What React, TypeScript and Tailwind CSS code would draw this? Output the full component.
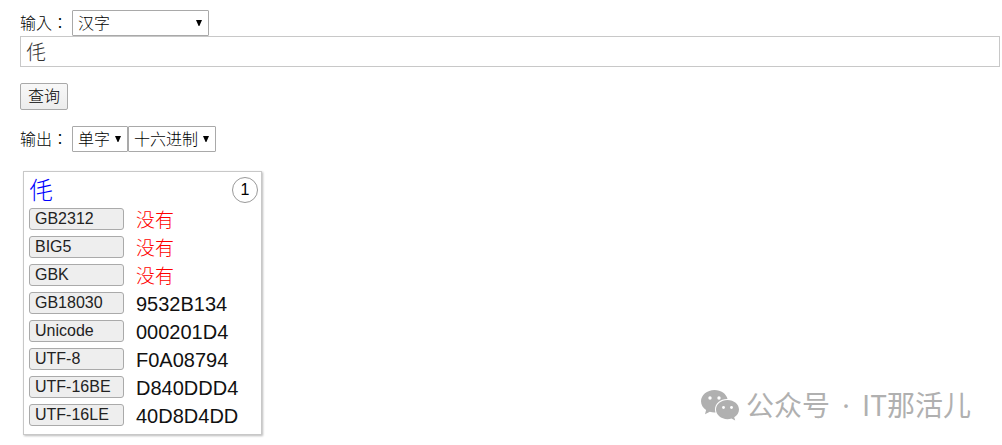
import { useState } from 'react';

interface CodeRow {
  label: string;
  value: string | null;
}

interface SelectBoxProps {
  label: string;
  options: string[];
  className: string;
}

const CHAR = '𠇔';

const codes: CodeRow[] = [
  { label: 'GB2312', value: null },
  { label: 'BIG5', value: null },
  { label: 'GBK', value: null },
  { label: 'GB18030', value: '9532B134' },
  { label: 'Unicode', value: '000201D4' },
  { label: 'UTF-8', value: 'F0A08794' },
  { label: 'UTF-16BE', value: 'D840DDD4' },
  { label: 'UTF-16LE', value: '40D8D4DD' },
];

function SelectBox({ label, options, className }: SelectBoxProps) {
  const [value, setValue] = useState(options[0]);

  return (
    <span className={`relative inline-block ${className}`}>
      <select
        aria-label={label}
        value={value}
        onChange={(e) => setValue(e.target.value)}
        className="block h-[26px] w-full appearance-none rounded-[1px] border border-[#a9a9a9] bg-white pt-px pl-[5px] text-base leading-6 font-light outline-none"
      >
        {options.map((option) => (
          <option key={option} value={option}>{option}</option>
        ))}
      </select>
      <svg viewBox="0 0 6 6" className="pointer-events-none absolute top-[10px] right-[7px] h-1.5 w-1.5">
        <path d="M0 0h6L3.4 6h-.8z" fill="#000" />
      </svg>
    </span>
  );
}

function CodeCard({ index }: { index: number }) {
  return (
    <section className="ml-[3px] w-[239px] border border-[#c8c8c8] bg-white px-[5px] pt-[5px] pb-[3px] shadow-[1px_1px_2px_#bbb]">
      <div className="flex h-[30px] items-start justify-between">
        <span className="text-2xl leading-7 font-light text-[#0000ff]">{CHAR}</span>
        <span className="-mr-[2px] flex h-[26px] w-[26px] items-center justify-center rounded-full border border-[#999] text-base">
          {index}
        </span>
      </div>
      <table className="border-collapse">
        <tbody>
          {codes.map(({ label, value }) => (
            <tr key={label} className="h-7">
              <th scope="row" className="p-0 pt-px align-top font-normal">
                <div className="h-[22px] w-[95px] rounded-[3px] border border-[#aaa] bg-[#eee] pl-[5px] text-left text-base leading-5 text-[#222]">
                  {label}
                </div>
              </th>
              <td className="p-0 pl-3 align-top">
                {value ? (
                  <span className="block text-xl leading-[26px] text-[#111]">{value}</span>
                ) : (
                  <span className="block text-[19px] leading-7 font-light text-[#ff0000]">没有</span>
                )}
              </td>
            </tr>
          ))}
        </tbody>
      </table>
    </section>
  );
}

function Watermark() {
  return (
    <div className="absolute top-[384px] right-[31px] flex items-center gap-[7px] text-[#b0b0b0]">
      <svg viewBox="0 0 38 32" className="h-8 w-[38px]" fill="currentColor">
        <path d="M13.5 1C6 1 0 6 0 12.3c0 3.6 2 6.8 5.1 8.8L4 25.2l4.8-2.5c1.5.5 3.1.7 4.7.7h1c-.3-1-.5-2-.5-3 0-5.8 5.4-10.4 12-10.4h.5C25.3 4.8 20 1 13.5 1z" />
        <path d="M26.5 11C20 11 15 15.3 15 20.6s5 9.6 11.5 9.6c1.4 0 2.800-.2 4-.6l3.700 2-1-3.300c2.900-1.800 4.800-4.500 4.800-7.700C38 15.300 33 11 26.500 11z" />
        <g fill="#fff">
          <circle cx="9" cy="9" r="1.7" />
          <circle cx="18" cy="9" r="1.7" />
          <circle cx="22.5" cy="18.5" r="1.4" />
          <circle cx="30.5" cy="18.5" r="1.4" />
        </g>
      </svg>
      <span className="font-['Noto_Sans_CJK_SC',sans-serif] text-[28px] leading-10 whitespace-nowrap">
        公众号<span className="px-[5px] font-['Noto_Sans',sans-serif]"> · </span>IT那活儿
      </span>
    </div>
  );
}

export default function App() {
  const [text, setText] = useState(CHAR);

  return (
    <main className="relative bg-white pt-[10px] pr-[2px] pb-[10px] pl-5 font-['Liberation_Sans','Noto_Sans_CJK_SC',sans-serif] text-base text-black">
      <form onSubmit={(e) => e.preventDefault()}>
        <div className="flex h-[26px] items-center">
          <label htmlFor="query" lang="zh-TW" className="w-[52px] pt-px font-['Liberation_Sans','Noto_Sans_CJK_TC',sans-serif] font-light whitespace-nowrap">输入：</label>
          <SelectBox label="输入" options={['汉字', '十六进制']} className="w-[137px]" />
        </div>
        <input
          id="query"
          type="text"
          value={text}
          onChange={(e) => setText(e.target.value)}
          className="block h-[31px] w-full border border-[#c8c8c8] px-[5px] text-xl font-light text-[#333] outline-none"
        />
        <button
          type="submit"
          className="mt-4 block h-[27px] w-12 rounded-[2px] border border-[#a9a9a9] bg-linear-to-b from-[#f8f8f8] to-[#ececec] pt-px text-base leading-6 font-light"
        >
          查询
        </button>
        <div className="mt-4 mb-[19px] flex h-[26px] items-center">
          <span lang="zh-TW" className="w-[52px] pt-px font-['Liberation_Sans','Noto_Sans_CJK_TC',sans-serif] font-light whitespace-nowrap">输出：</span>
          <SelectBox label="输出范围" options={['单字', '全部']} className="w-14" />
          <SelectBox label="输出进制" options={['十六进制', '十进制']} className="w-[88px]" />
        </div>
      </form>
      <CodeCard index={1} />
      <Watermark />
    </main>
  );
}
